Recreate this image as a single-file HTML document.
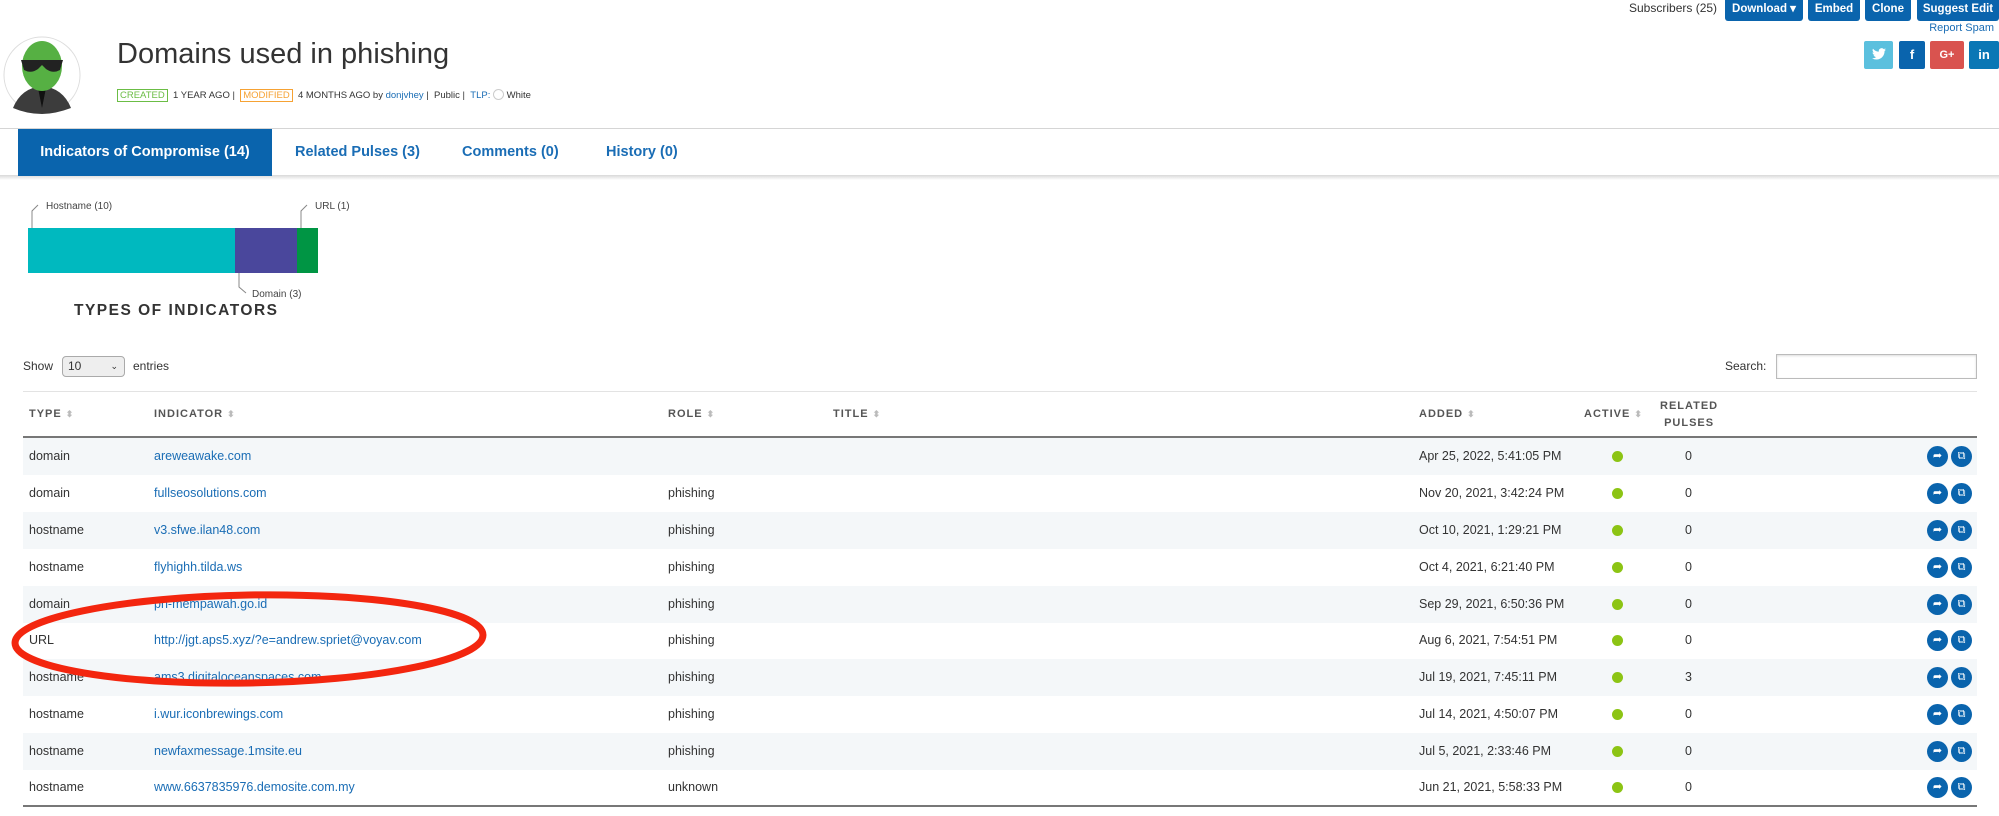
<!DOCTYPE html>
<html><head><meta charset="utf-8"><style>
*{margin:0;padding:0;box-sizing:border-box}
body{width:1999px;height:816px;overflow:hidden;background:#fff;font-family:"Liberation Sans",sans-serif;color:#333;position:relative}
.a{position:absolute;white-space:nowrap}
.btn{position:absolute;top:0;height:21px;background:#0a64ad;color:#fff;font-size:11.5px;font-weight:bold;border-radius:0 0 3px 3px;text-align:center;line-height:19px}
.soc{position:absolute;top:41px;height:28px;border-radius:2px;color:#fff;font-weight:bold;font-size:13px;text-align:center;line-height:28px}
a,.lnk{color:#1a6db5}
.row{position:absolute;left:23px;width:1954px;height:37px;font-size:12.5px;line-height:37px}
.row.o{background:#f4f7f9}
.row span{position:absolute;top:0}
.hd{font-size:11px;font-weight:bold;letter-spacing:1px;color:#555}
.dot{position:absolute;top:13px;width:11px;height:11px;border-radius:50%;background:#8cc414}
.ic{position:absolute;top:8px;width:21px;height:21px;border-radius:50%;background:#0a64ad;color:#fff;font-style:normal;font-size:11px;line-height:21px;text-align:center}
.sort{color:#bbb;font-size:9px}
</style></head><body>
<div class="a" style="left:1629px;top:0;font-size:12px;line-height:17px">Subscribers (25)</div>
<div class="btn" style="left:1725px;width:78px">Download ▾</div>
<div class="btn" style="left:1808px;width:52px">Embed</div>
<div class="btn" style="left:1865px;width:46px">Clone</div>
<div class="btn" style="left:1917px;width:82px">Suggest Edit</div>
<div class="a lnk" style="right:5px;top:22px;font-size:11px">Report Spam</div>
<div class="soc" style="left:1864px;width:29px;background:#5bc0de">
<svg width="14" height="12" viewBox="0 0 24 20" style="vertical-align:-1px"><path d="M24 2.4a10 10 0 0 1-2.8.8A5 5 0 0 0 23.3.4a10 10 0 0 1-3.1 1.2A4.9 4.9 0 0 0 11.8 6 14 14 0 0 1 1.7.9a4.9 4.9 0 0 0 1.5 6.6A4.9 4.9 0 0 1 1 6.9a4.9 4.9 0 0 0 3.9 4.8 4.9 4.9 0 0 1-2.2.1 4.9 4.9 0 0 0 4.6 3.4A9.9 9.9 0 0 1 0 17.3 14 14 0 0 0 7.5 19.5c9 0 14-7.5 14-14v-.6A10 10 0 0 0 24 2.4z" fill="#fff"/></svg></div>
<div class="soc" style="left:1899px;width:26px;background:#0a64ad">f</div>
<div class="soc" style="left:1930px;width:34px;background:#d9534f;font-size:11px">G+</div>
<div class="soc" style="left:1969px;width:30px;background:#0a77b5">in</div>
<svg class="a" style="left:3px;top:36px" width="78" height="78" viewBox="0 0 78 78">
<circle cx="39" cy="39" r="38" fill="#fff" stroke="#ddd"/>
<path d="M10 72 Q18 52 39 50 Q60 52 68 72 Q52 78 39 78 Q24 78 10 72Z" fill="#3c3c3c"/>
<path d="M35 52 L39 72 L43 52Z" fill="#111"/>
<ellipse cx="39" cy="30" rx="20" ry="25" fill="#56b043"/>
<path d="M18 24 H60 L57 34 Q50 38 43 33 L39 29 L35 33 Q28 38 21 34Z" fill="#222"/>
</svg>
<div class="a" style="left:117px;top:38px;font-size:29px;color:#333">Domains used in phishing</div>
<div class="a" style="left:117px;top:89px;font-size:9.5px;line-height:14px;color:#333">
<span style="border:1px solid #6bbd45;color:#6bbd45;padding:0 2px">CREATED</span>&nbsp; 1 YEAR AGO | &nbsp;<span style="border:1px solid #f6a234;color:#f6a234;padding:0 2px">MODIFIED</span>&nbsp; 4 MONTHS AGO by <span class="lnk">donjvhey</span> | &nbsp;Public | &nbsp;<span class="lnk">TLP:</span> <span style="display:inline-block;width:11px;height:11px;border:1px solid #ccc;border-radius:50%;vertical-align:-2px"></span> White</div>
<div class="a" style="left:0;top:128px;width:1999px;height:1px;background:#d5d5d5"></div>
<div class="a" style="left:0;top:175px;width:1999px;height:5px;background:linear-gradient(#d8d8d8,#fff)"></div>
<div class="a" style="left:18px;top:129px;width:254px;height:47px;background:#0a64ad;color:#fff;font-size:14.5px;font-weight:bold;text-align:center;line-height:47px">Indicators of Compromise (14)</div>
<div class="a lnk" style="left:295px;top:129px;font-size:14.5px;font-weight:bold;line-height:47px">Related Pulses (3)</div>
<div class="a lnk" style="left:462px;top:129px;font-size:14.5px;font-weight:bold;line-height:47px">Comments (0)</div>
<div class="a lnk" style="left:606px;top:129px;font-size:14.5px;font-weight:bold;line-height:47px">History (0)</div>
<svg class="a" style="left:0;top:195px" width="360" height="110">
<polyline points="32,34 32,16 38,10" fill="none" stroke="#888"/>
<polyline points="301,34 301,16 307,10" fill="none" stroke="#888"/>
<polyline points="239,78 239,92 246,98" fill="none" stroke="#888"/>
<text x="46" y="14" font-size="10" fill="#444" font-family="Liberation Sans">Hostname (10)</text>
<text x="315" y="14" font-size="10" fill="#444" font-family="Liberation Sans">URL (1)</text>
<text x="252" y="102" font-size="10" fill="#444" font-family="Liberation Sans">Domain (3)</text>
<rect x="28" y="33" width="207" height="45" fill="#00b9bf"/>
<rect x="235" y="33" width="62" height="45" fill="#4a479c"/>
<rect x="297" y="33" width="21" height="45" fill="#009544"/>
</svg>
<div class="a" style="left:74px;top:302px;font-size:15.5px;font-weight:bold;letter-spacing:1.5px;color:#333">TYPES OF INDICATORS</div>
<div class="a" style="left:23px;top:359px;font-size:12px">Show</div>
<div class="a" style="left:62px;top:356px;width:63px;height:21px;border:1px solid #aaa;border-radius:4px;background:#eee;font-size:12px;line-height:19px;padding-left:5px">10<span style="position:absolute;right:6px;font-size:9px">⌄</span></div>
<div class="a" style="left:133px;top:359px;font-size:12px">entries</div>
<div class="a" style="left:1725px;top:359px;font-size:12px">Search:</div>
<div class="a" style="left:1776px;top:354px;width:201px;height:25px;border:1px solid #bbb;box-shadow:inset 0 1px 2px #ddd"></div>
<div class="a" style="left:23px;top:391px;width:1954px;height:1px;background:#e3e3e3"></div>
<div class="a hd" style="left:29px;top:408px">TYPE <span class="sort">⬍</span></div>
<div class="a hd" style="left:154px;top:408px">INDICATOR <span class="sort">⬍</span></div>
<div class="a hd" style="left:668px;top:408px">ROLE <span class="sort">⬍</span></div>
<div class="a hd" style="left:833px;top:408px">TITLE <span class="sort">⬍</span></div>
<div class="a hd" style="left:1419px;top:408px">ADDED <span class="sort">⬍</span></div>
<div class="a hd" style="left:1584px;top:408px">ACTIVE <span class="sort">⬍</span></div>
<div class="a hd" style="left:1660px;top:398px;text-align:center;line-height:17px">RELATED<br>PULSES</div>
<div class="a" style="left:23px;top:436px;width:1954px;height:2px;background:#777"></div>
<div class="a" style="left:23px;top:805px;width:1954px;height:2px;background:#777"></div>

<div class="row o" style="top:438px"><span style="left:6px">domain</span><span class="lnk" style="left:131px">areweawake.com</span><span style="left:1396px">Apr 25, 2022, 5:41:05 PM</span><i class="dot" style="left:1589px"></i><span style="left:1662px">0</span><i class="ic" style="left:1904px">➦</i><i class="ic" style="left:1928px">⧉</i></div>
<div class="row" style="top:475px"><span style="left:6px">domain</span><span class="lnk" style="left:131px">fullseosolutions.com</span><span style="left:645px">phishing</span><span style="left:1396px">Nov 20, 2021, 3:42:24 PM</span><i class="dot" style="left:1589px"></i><span style="left:1662px">0</span><i class="ic" style="left:1904px">➦</i><i class="ic" style="left:1928px">⧉</i></div>
<div class="row o" style="top:512px"><span style="left:6px">hostname</span><span class="lnk" style="left:131px">v3.sfwe.ilan48.com</span><span style="left:645px">phishing</span><span style="left:1396px">Oct 10, 2021, 1:29:21 PM</span><i class="dot" style="left:1589px"></i><span style="left:1662px">0</span><i class="ic" style="left:1904px">➦</i><i class="ic" style="left:1928px">⧉</i></div>
<div class="row" style="top:549px"><span style="left:6px">hostname</span><span class="lnk" style="left:131px">flyhighh.tilda.ws</span><span style="left:645px">phishing</span><span style="left:1396px">Oct 4, 2021, 6:21:40 PM</span><i class="dot" style="left:1589px"></i><span style="left:1662px">0</span><i class="ic" style="left:1904px">➦</i><i class="ic" style="left:1928px">⧉</i></div>
<div class="row o" style="top:586px"><span style="left:6px">domain</span><span class="lnk" style="left:131px">pn-mempawah.go.id</span><span style="left:645px">phishing</span><span style="left:1396px">Sep 29, 2021, 6:50:36 PM</span><i class="dot" style="left:1589px"></i><span style="left:1662px">0</span><i class="ic" style="left:1904px">➦</i><i class="ic" style="left:1928px">⧉</i></div>
<div class="row" style="top:622px"><span style="left:6px">URL</span><span class="lnk" style="left:131px">http://jgt.aps5.xyz/?e=andrew.spriet@voyav.com</span><span style="left:645px">phishing</span><span style="left:1396px">Aug 6, 2021, 7:54:51 PM</span><i class="dot" style="left:1589px"></i><span style="left:1662px">0</span><i class="ic" style="left:1904px">➦</i><i class="ic" style="left:1928px">⧉</i></div>
<div class="row o" style="top:659px"><span style="left:6px">hostname</span><span class="lnk" style="left:131px">ams3.digitaloceanspaces.com</span><span style="left:645px">phishing</span><span style="left:1396px">Jul 19, 2021, 7:45:11 PM</span><i class="dot" style="left:1589px"></i><span style="left:1662px">3</span><i class="ic" style="left:1904px">➦</i><i class="ic" style="left:1928px">⧉</i></div>
<div class="row" style="top:696px"><span style="left:6px">hostname</span><span class="lnk" style="left:131px">i.wur.iconbrewings.com</span><span style="left:645px">phishing</span><span style="left:1396px">Jul 14, 2021, 4:50:07 PM</span><i class="dot" style="left:1589px"></i><span style="left:1662px">0</span><i class="ic" style="left:1904px">➦</i><i class="ic" style="left:1928px">⧉</i></div>
<div class="row o" style="top:733px"><span style="left:6px">hostname</span><span class="lnk" style="left:131px">newfaxmessage.1msite.eu</span><span style="left:645px">phishing</span><span style="left:1396px">Jul 5, 2021, 2:33:46 PM</span><i class="dot" style="left:1589px"></i><span style="left:1662px">0</span><i class="ic" style="left:1904px">➦</i><i class="ic" style="left:1928px">⧉</i></div>
<div class="row" style="top:769px"><span style="left:6px">hostname</span><span class="lnk" style="left:131px">www.6637835976.demosite.com.my</span><span style="left:645px">unknown</span><span style="left:1396px">Jun 21, 2021, 5:58:33 PM</span><i class="dot" style="left:1589px"></i><span style="left:1662px">0</span><i class="ic" style="left:1904px">➦</i><i class="ic" style="left:1928px">⧉</i></div>
<svg class="a" style="left:0;top:580px" width="520" height="120">
<ellipse cx="249" cy="59" rx="234" ry="44" fill="none" stroke="#f3260f" stroke-width="7" transform="rotate(-1 249 59)"/>
</svg>
</body></html>
